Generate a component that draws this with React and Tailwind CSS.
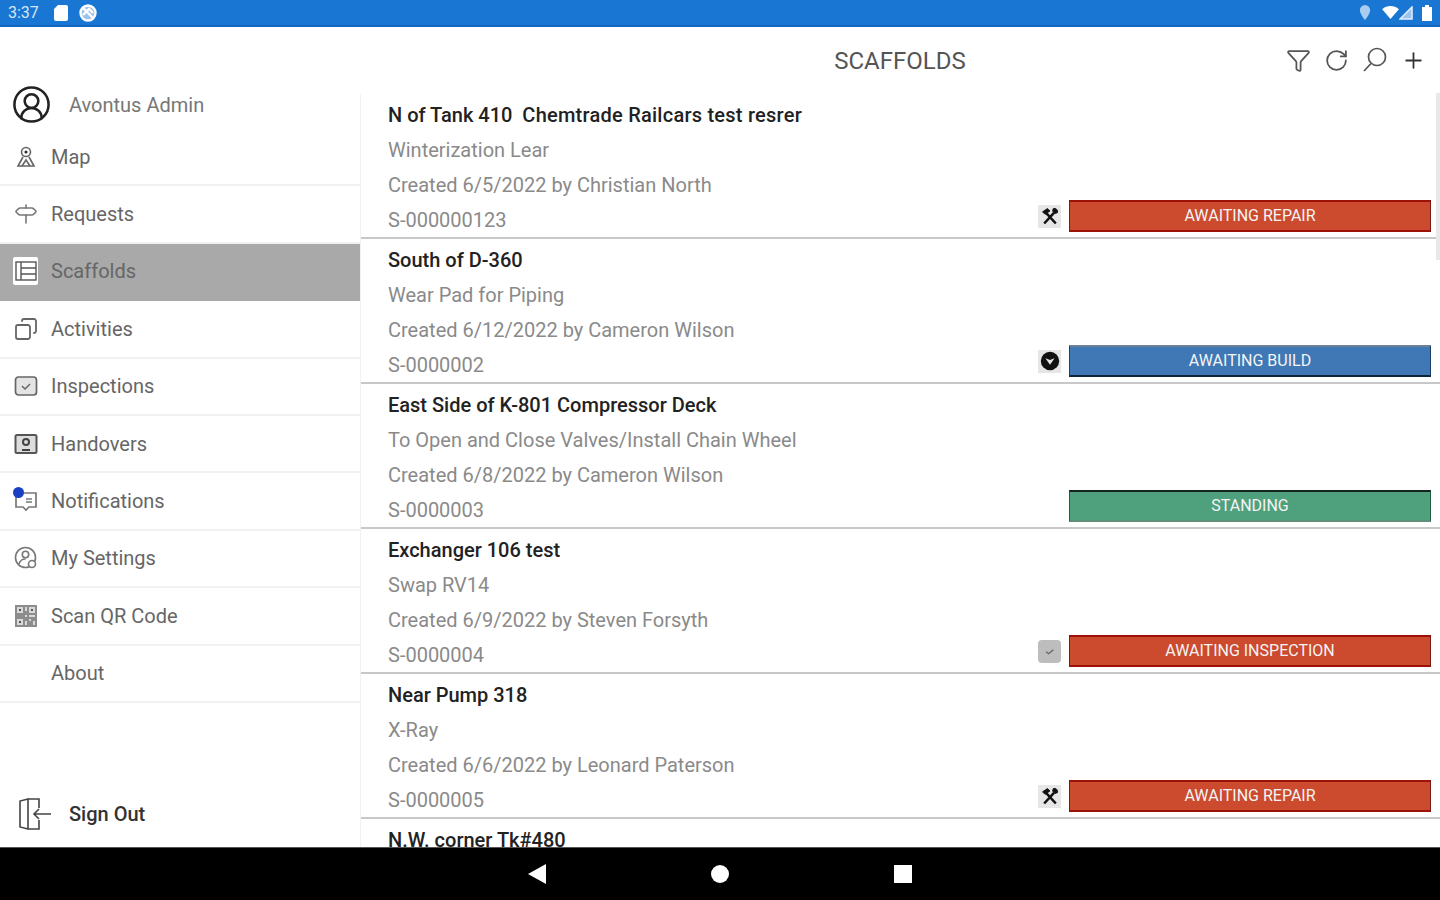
import React from "react";
import { CircleUserRound, Copy, Funnel, Plus, RotateCw, Signpost } from "lucide-react";

const ROBOTO = "font-['Roboto','Liberation_Sans',sans-serif]";

function MapIcon() {
  return (
    <svg viewBox="0 0 24 24" className="w-6 h-6" fill="none" stroke="#666" strokeWidth="1.6">
      <circle cx="12" cy="7" r="4.5" />
      <circle cx="12" cy="7" r="1.6" fill="#333" stroke="none" />
      <path d="M9 12l-5 9h16l-5-9" />
      <path d="M8 21l4-6 4 6" />
    </svg>
  );
}

function ScaffoldIcon() {
  return (
    <div className="flex items-center justify-center w-[28px] h-[28px] bg-white rounded-[2px]">
      <svg viewBox="0 0 24 24" className="w-[24px] h-[24px]" fill="none" stroke="#555" strokeWidth="1.4">
        <rect x="2" y="3" width="20" height="18" />
        <path d="M7 3v18M7 9h15M7 15h15" />
      </svg>
    </div>
  );
}

function InspectionIcon() {
  return (
    <svg viewBox="0 0 24 24" className="w-6 h-6" fill="#e4e4e4" stroke="#666" strokeWidth="1.7">
      <rect x="1.500" y="3" width="21" height="18" rx="3" />
      <path d="M8 12l3 3 5-5" strokeWidth="1.500" fill="none" />
    </svg>
  );
}

function HandoverIcon() {
  return (
    <svg viewBox="0 0 24 24" className="w-6 h-6" fill="#ddd" stroke="#555" strokeWidth="2">
      <rect x="1.500" y="3" width="21" height="18" rx="1.500" />
      <circle cx="12" cy="10" r="3" fill="none" stroke="#444" />
      <path d="M8 18h8" stroke="#444" />
    </svg>
  );
}

function NotificationIcon() {
  return (
    <div className="relative w-6 h-6">
      <svg viewBox="0 0 24 24" className="w-6 h-6" fill="none" stroke="#777" strokeWidth="1.700">
        <path d="M2 4h20v14h-7l-3 3-3-3H2z" />
        <path d="M12 10h6M12 13h6" />
      </svg>
      <span className="absolute -left-[1px] -top-[2px] w-[11px] h-[11px] rounded-full bg-[#1b3fc4]" />
    </div>
  );
}

function SettingsIcon() {
  return (
    <svg viewBox="0 0 24 24" className="w-6 h-6" fill="none" stroke="#777" strokeWidth="1.600">
      <circle cx="11.500" cy="11.500" r="10" />
      <circle cx="11.500" cy="8.500" r="3.200" />
      <path d="M5 18c1-3.500 3.500-5 6.500-5" />
      <circle cx="18" cy="18" r="3.500" fill="#fff" />
    </svg>
  );
}

// dense QR block, the reference shows it almost as a solid grey square
function QrIcon() {
  return (
    <svg viewBox="0 0 24 24" className="w-6 h-6">
      <rect x="1" y="1" width="22" height="22" fill="#8c8c8c" />
      <path d="M3 3h6v6H3zM15 3h6v6h-6zM3 15h6v6H3zM11 11h2v2h-2zM15 15h2v2h-2zM19 17h2v4h-2zM11 3h2v4h-2zM11 17h2v4h-2zM15 11h6v2h-6z" fill="#d9d9d9" />
      <path d="M5 5h2v2H5zM17 5h2v2h-2zM5 17h2v2H5z" fill="#555" />
    </svg>
  );
}

function SearchIcon() {
  return (
    <svg viewBox="0 0 26 26" className="w-[26px] h-[26px]" fill="none" stroke="#555" strokeWidth="1.700">
      <circle cx="15" cy="10" r="8.500" />
      <path d="M9 16.500L2 24" />
    </svg>
  );
}

function SignOutIcon() {
  return (
    <svg viewBox="0 0 36 36" className="w-[36px] h-[36px]" fill="none" stroke="#444" strokeWidth="1.600">
      <path d="M11 3L3 5v26l8 2z" />
      <path d="M11 3h11v9M11 33h11v-9" />
      <path d="M34 18H17M22 13l-5 5 5 5" />
    </svg>
  );
}

function HammerWrench() {
  return (
    <svg viewBox="0 0 24 24" className="w-[20px] h-[20px]" fill="none" stroke="#111" strokeWidth="3">
      <path d="M5 21L17 8M19 21L7 8" />
      <path d="M3 7l6-4 3 3-6 4zM16 3a4 4 0 0 1 5 5l-3 1-3-3z" fill="#111" strokeWidth="1" />
    </svg>
  );
}

function BuildIcon() {
  return (
    <svg viewBox="0 0 24 24" className="w-[22px] h-[22px]">
      <circle cx="12" cy="12" r="10" fill="#111" />
      <path d="M7 9l5 2 5-2-5 7z" fill="#e5e5e5" />
    </svg>
  );
}

function InspectBadgeIcon() {
  return (
    <svg viewBox="0 0 24 24" className="w-[16px] h-[16px]" fill="none" stroke="#666" strokeWidth="2">
      <path d="M6 13l4 3 7-6" />
    </svg>
  );
}

const navItems = [
  { label: "Map", icon: <MapIcon /> },
  { label: "Requests", icon: <Signpost className="w-6 h-6 text-[#777]" strokeWidth={1.6} /> },
  { label: "Scaffolds", icon: <ScaffoldIcon />, active: true },
  { label: "Activities", icon: <Copy className="w-6 h-6 text-[#666] -scale-x-100" strokeWidth={1.8} /> },
  { label: "Inspections", icon: <InspectionIcon /> },
  { label: "Handovers", icon: <HandoverIcon /> },
  { label: "Notifications", icon: <NotificationIcon /> },
  { label: "My Settings", icon: <SettingsIcon /> },
  { label: "Scan QR Code", icon: <QrIcon /> },
  { label: "About", icon: null },
];

const RED = "bg-[#cc4a2e] border-y-[#9c1208] border-x-[#7a1a10]";

const scaffolds = [
  {
    title: (
      <>
        N of Tank 410 <span className="ml-[5px] tracking-[0.24px]">Chemtrade Railcars test resrer</span>
      </>
    ),
    key: "S-000000123",
    desc: "Winterization Lear",
    created: "Created 6/5/2022 by Christian North",
    tag: "S-000000123",
    status: "AWAITING REPAIR",
    badge: RED,
    icon: <HammerWrench />,
  },
  {
    title: "South of D-360",
    desc: "Wear Pad for Piping",
    created: "Created 6/12/2022 by Cameron Wilson",
    tag: "S-0000002",
    status: "AWAITING BUILD",
    badge: "bg-[#3f78b5] border-t-[#6d8199] border-b-[#10243a] border-x-[#1d3f66]",
    icon: <BuildIcon />,
  },
  {
    title: "East Side of K-801 Compressor Deck",
    desc: "To Open and Close Valves/Install Chain Wheel",
    created: "Created 6/8/2022 by Cameron Wilson",
    tag: "S-0000003",
    status: "STANDING",
    badge: "bg-[#4fa17e] border-t-[#12241c] border-b-[#5f8f7b] border-x-[#1f5a42]",
    icon: null,
  },
  {
    title: "Exchanger 106 test",
    desc: "Swap RV14",
    created: "Created 6/9/2022 by Steven Forsyth",
    tag: "S-0000004",
    status: "AWAITING INSPECTION",
    badge: RED,
    icon: <InspectBadgeIcon />,
    iconBox: "bg-[#bdbdbd] rounded-[4px]",
  },
  {
    title: "Near Pump 318",
    desc: "X-Ray",
    created: "Created 6/6/2022 by Leonard Paterson",
    tag: "S-0000005",
    status: "AWAITING REPAIR",
    badge: RED,
    icon: <HammerWrench />,
  },
  {
    title: "N.W. corner Tk#480",
    desc: "",
    created: "",
    tag: "",
    status: null,
  },
];

function NavRow({ item }) {
  return (
    <div
      className={`flex items-center h-[57.4px] pl-[13px] border-b-2 ${
        item.active ? "bg-[#a9a9a9] border-[#a9a9a9]" : "border-[#f1f1f1]"
      }`}
    >
      <div className="flex items-center justify-center w-[25px] shrink-0">{item.icon}</div>
      <span className="ml-[13px] text-[20px] text-[#666]">{item.label}</span>
    </div>
  );
}

function ScaffoldRow({ row }) {
  return (
    <div className="flex items-end justify-between h-[145px] shrink-0 pl-[27px] pr-[9px] pb-[5px] border-b-2 border-[#c8c8c8]">
      <div className="flex flex-col self-start pt-[4px]">
        <div className="h-[35px] leading-[35px] text-[20px] font-medium text-[#222] whitespace-pre">{row.title}</div>
        <div className="h-[35px] leading-[35px] text-[20px] text-[#8a8a8a]">{row.desc}</div>
        <div className="h-[35px] leading-[35px] text-[20px] text-[#8a8a8a]">{row.created}</div>
        <div className="h-[35px] leading-[35px] text-[20px] text-[#8a8a8a]">{row.tag}</div>
      </div>
      {row.status && (
        <div className="flex items-center gap-[8px]">
          {row.icon && (
            <div className={`flex items-center justify-center w-[23px] h-[23px] ${row.iconBox || "bg-[#e6e6e6]"}`}>
              {row.icon}
            </div>
          )}
          <div
            className={`flex items-center justify-center w-[362px] h-[32px] border-y-2 border-x text-[16px] text-[#f4f4f4] ${row.badge}`}
          >
            {row.status}
          </div>
        </div>
      )}
    </div>
  );
}

export default function App() {
  return (
    <div className={`relative flex flex-col w-[1440px] h-[900px] overflow-hidden bg-white ${ROBOTO}`}>
      <div className="flex items-center justify-between h-[27px] shrink-0 px-[8px] bg-[#1976d2] border-b-2 border-[#1565c0] text-white">
        <div className="flex items-center">
          <span className="text-[16px] text-[#d5e5f6]">3:37</span>
          <svg viewBox="0 0 14 16" className="ml-[15px] w-[14px] h-[16px]" fill="#fff">
            <path d="M4 0h8a2 2 0 0 1 2 2v12a2 2 0 0 1-2 2H2a2 2 0 0 1-2-2V4z" />
          </svg>
          <svg viewBox="0 0 18 18" className="ml-[11px] w-[18px] h-[18px]" fill="none" stroke="#fff" strokeWidth="2.400">
            <circle cx="9" cy="9" r="7.500" fill="#9cc3ec" />
            <path d="M3.500 3.500l11 11M4 11l6-6 4 4" />
          </svg>
        </div>
        <div className="flex items-center">
          <svg viewBox="0 0 12 16" className="w-[12px] h-[15px]" fill="#a9cdf2">
            <path d="M6 0a5.500 5.500 0 0 1 5.500 5.500C11.500 9.500 6 16 6 16S.5 9.500.5 5.500A5.500 5.500 0 0 1 6 0z" />
          </svg>
          <svg viewBox="0 0 18 14" className="ml-[11px] w-[17px] h-[13px]" fill="#fff">
            <path d="M0 3.500C5-1 13-1 18 3.500L9 14z" />
          </svg>
          <svg viewBox="0 0 14 14" className="w-[14px] h-[14px]" fill="#9cc3ec" stroke="#e4eefa" strokeWidth="1.500">
            <path d="M13 1v12H1z" />
          </svg>
          <svg viewBox="0 0 10 16" className="ml-[9px] w-[10px] h-[16px]" fill="#fff">
            <path d="M3 0h4v2h3v14H0V2h3z" />
          </svg>
        </div>
      </div>

      <div className="flex flex-1 min-h-0">
        <aside className="flex flex-col w-[360px] shrink-0">
          <div className="flex items-center h-[102px] pt-[53px] pl-[11px]">
            <CircleUserRound className="w-[41px] h-[41px] text-[#222] shrink-0" strokeWidth={1.5} />
            <span className="ml-[17px] text-[20px] text-[#777]">Avontus Admin</span>
          </div>
          <nav className="flex flex-col">
            {navItems.map((item) => (
              <NavRow key={item.label} item={item} />
            ))}
          </nav>
          <div className="flex items-center mt-auto h-[66px] pl-[17px]">
            <SignOutIcon />
            <span className="ml-[16px] text-[20px] font-medium text-[#333]">Sign Out</span>
          </div>
        </aside>

        <main className="relative flex flex-col flex-1 min-w-0">
          <header className="relative flex items-center justify-center h-[67px] shrink-0">
            <h1 className="text-[24px] font-normal text-[#555]">SCAFFOLDS</h1>
            <div className="absolute right-[14px] top-[20px] flex items-center gap-[13px] text-[#555]">
              <Funnel className="w-[25px] h-[25px]" strokeWidth={1.7} />
              <RotateCw className="w-[25px] h-[25px]" strokeWidth={1.7} />
              <SearchIcon />
              <Plus className="w-[25px] h-[25px] text-[#333]" strokeWidth={1.7} />
            </div>
          </header>
          <div className="flex flex-col flex-1 min-h-0 overflow-hidden border-l border-[#f2f2f2]">
            {scaffolds.map((row) => (
              <ScaffoldRow key={row.tag || "last"} row={row} />
            ))}
          </div>
          <div className="absolute right-0 top-[66px] w-[4px] h-[167px] bg-[#e8e8e8]" />
        </main>
      </div>

      <div className="flex items-center justify-center h-[53px] shrink-0 bg-black border-t border-[#555]">
        <svg viewBox="0 0 18 20" className="w-[18px] h-[20px]" fill="#fff">
          <path d="M0 10L18 0v20z" />
        </svg>
        <span className="ml-[165px] w-[18px] h-[18px] rounded-full bg-white" />
        <span className="ml-[165px] w-[18px] h-[18px] bg-white" />
      </div>
    </div>
  );
}
